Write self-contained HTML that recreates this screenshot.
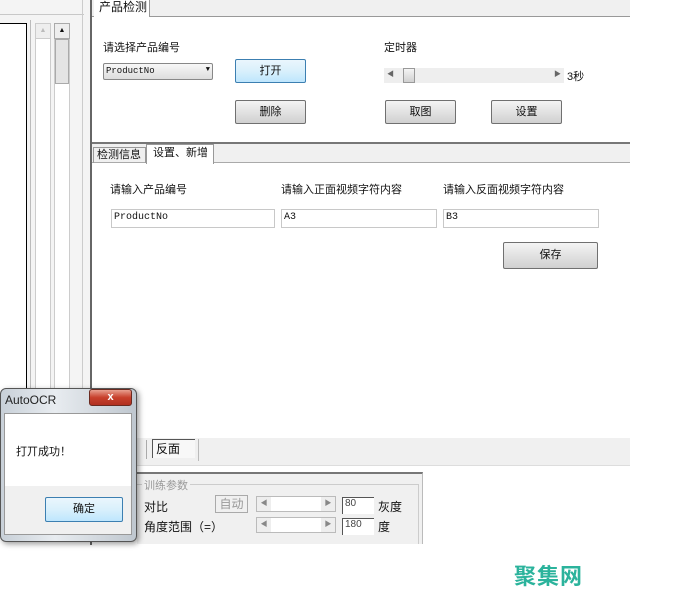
<!DOCTYPE html>
<html><head><meta charset="utf-8"><style>
*{margin:0;padding:0;box-sizing:border-box}
body{width:693px;height:598px;background:#fff;position:relative;overflow:hidden;font-family:"Liberation Sans","Noto Sans CJK SC",sans-serif;font-size:11px;color:#111}
.a{position:absolute}
.btn{position:absolute;border:1px solid #707070;border-radius:2px;background:linear-gradient(#f4f4f4,#e2e2e2 50%,#d0d0d0);text-align:center;font-size:11px}
.inp{position:absolute;border:1px solid #c8c8c8;background:#fff;font-family:"Liberation Mono",monospace;font-size:10px;padding:2px 2px;height:19px}
</style></head><body>
<!-- left pane -->
<div class="a" style="left:0;top:0;width:90px;height:395px;background:#f4f4f4"></div>
<div class="a" style="left:0;top:14px;width:84px;height:1px;background:#c8c8c8"></div>
<div class="a" style="left:0;top:23px;width:27px;height:370px;background:#fff;border-top:1px solid #000;border-right:1px solid #000"></div>
<div class="a" style="left:30px;top:20px;width:1px;height:375px;background:#bbb"></div>
<div class="a" style="left:35px;top:23px;width:16px;height:372px;background:#fff;border:1px solid #ccc"></div>
<div class="a" style="left:35px;top:23px;width:16px;height:16px;background:#eee;border:1px solid #ccc;font-size:7px;color:#bbb;text-align:center;line-height:14px">▲</div>
<div class="a" style="left:54px;top:23px;width:16px;height:372px;background:#fff;border:1px solid #ccc"></div>
<div class="a" style="left:54px;top:23px;width:16px;height:16px;background:#eee;border:1px solid #aaa;font-size:7px;text-align:center;line-height:14px">▲</div>
<div class="a" style="left:55px;top:39px;width:14px;height:45px;background:#e4e4e4;border:1px solid #aaa"></div>
<div class="a" style="left:82px;top:0;width:1px;height:395px;background:#ccc"></div>
<div class="a" style="left:90px;top:0;width:2px;height:545px;background:#666"></div>
<!-- top tab -->
<div class="a" style="left:92px;top:0;width:538px;height:17px;background:#f0f0f0;border-bottom:1px solid #999"></div>
<div class="a" style="left:94px;top:0;width:56px;height:17px;background:#fff;border-right:1px solid #999;padding-left:5px;font-size:12px;line-height:15px">产品检测</div>
<div class="a" style="left:92px;top:17px;width:538px;height:125px;background:#fff"></div>
<div class="a" style="left:103px;top:39px;font-size:11px">请选择产品编号</div>
<div class="a" style="left:103px;top:63px;width:110px;height:17px;border:1px solid #888;border-radius:2px;background:linear-gradient(#f8f8f8,#ddd);font-family:'Liberation Mono',monospace;font-size:9px;padding:2px 2px">ProductNo<span style="float:right;font-size:7px">▼</span></div>
<div class="btn" style="left:235px;top:59px;width:71px;height:24px;line-height:22px;border-color:#3c7fb1;background:linear-gradient(#eaf6fd,#d9f0fc 50%,#bee6fd)">打开</div>
<div class="btn" style="left:235px;top:100px;width:71px;height:24px;line-height:22px">删除</div>
<div class="a" style="left:384px;top:39px">定时器</div>
<div class="a" style="left:384px;top:68px;width:180px;height:15px;background:#eee"><span class="a" style="left:3px;top:1px;font-size:7px;color:#666">◀</span><span class="a" style="right:3px;top:1px;font-size:7px;color:#666">▶</span></div>
<div class="a" style="left:403px;top:68px;width:12px;height:15px;border:1px solid #999;background:linear-gradient(#f4f4f4,#d0d0d0)"></div>
<div class="a" style="left:567px;top:68px;font-size:11px">3秒</div>
<div class="btn" style="left:385px;top:100px;width:71px;height:24px;line-height:22px">取图</div>
<div class="btn" style="left:491px;top:100px;width:71px;height:24px;line-height:22px">设置</div>
<!-- second tabs -->
<div class="a" style="left:92px;top:142px;width:538px;height:2px;background:#777"></div>
<div class="a" style="left:92px;top:144px;width:538px;height:19px;background:#f0f0f0;border-bottom:1px solid #aaa"></div>
<div class="a" style="left:93px;top:147px;width:53px;height:16px;border:1px solid #999;border-bottom:none;padding-left:3px;font-size:11px;line-height:15px">检测信息</div>
<div class="a" style="left:146px;top:144px;width:68px;height:20px;background:#fff;border:1px solid #999;border-bottom:none;padding-left:6px;font-size:11px;line-height:16px">设置、新增</div>
<div class="a" style="left:92px;top:164px;width:538px;height:274px;background:#fff"></div>
<div class="a" style="left:110px;top:181px">请输入产品编号</div>
<div class="a" style="left:281px;top:181px">请输入正面视频字符内容</div>
<div class="a" style="left:443px;top:181px">请输入反面视频字符内容</div>
<div class="inp" style="left:111px;top:209px;width:164px">ProductNo</div>
<div class="inp" style="left:281px;top:209px;width:156px">A3</div>
<div class="inp" style="left:443px;top:209px;width:156px">B3</div>
<div class="btn" style="left:503px;top:242px;width:95px;height:27px;line-height:25px">保存</div>
<!-- lower strip -->
<div class="a" style="left:137px;top:438px;width:493px;height:28px;background:#f0f0f0;border-bottom:1px solid #ddd"></div>
<div class="a" style="left:146px;top:440px;width:1px;height:19px;background:#aaa"></div>
<div class="a" style="left:152px;top:439px;width:43px;height:19px;border-left:1px solid #555;border-top:1px solid #555;background:#f8f8f8;padding-left:3px;font-size:12px;line-height:18px">反面</div>
<div class="a" style="left:198px;top:439px;width:1px;height:22px;background:#bbb"></div>
<div class="a" style="left:137px;top:472px;width:286px;height:72px;background:#f0f0f0;border-top:2px solid #777;border-right:1px solid #bbb"></div>
<div class="a" style="left:137px;top:484px;width:282px;height:60px;border:1px solid #ccc;border-left:none;border-bottom:none"></div>
<div class="a" style="left:142px;top:477px;background:#f0f0f0;color:#999;padding:0 2px">训练参数</div>
<div class="a" style="left:144px;top:498px;font-size:12px">对比</div>
<div class="a" style="left:144px;top:518px;font-size:12px">角度范围（=）</div>
<div class="a" style="left:215px;top:495px;width:33px;height:18px;border:1px solid #aaa;color:#999;text-align:center;line-height:16px;font-size:12px">自动</div>
<div class="a" style="left:256px;top:496px;width:80px;height:16px;background:#fff;border:1px solid #bbb"><span class="a" style="left:0;top:0;width:14px;height:14px;background:#eee;font-size:7px;color:#888;text-align:center;line-height:14px">◀</span><span class="a" style="right:0;top:0;width:14px;height:14px;background:#eee;font-size:7px;color:#888;text-align:center;line-height:14px">▶</span></div>
<div class="a" style="left:256px;top:517px;width:80px;height:16px;background:#fff;border:1px solid #bbb"><span class="a" style="left:0;top:0;width:14px;height:14px;background:#eee;font-size:7px;color:#888;text-align:center;line-height:14px">◀</span><span class="a" style="right:0;top:0;width:14px;height:14px;background:#eee;font-size:7px;color:#888;text-align:center;line-height:14px">▶</span></div>
<div class="a" style="left:342px;top:497px;width:32px;height:17px;background:#fff;border-left:1px solid #555;border-top:1px solid #555;font-size:10px;padding-left:2px;color:#444">80</div>
<div class="a" style="left:342px;top:518px;width:32px;height:17px;background:#fff;border-left:1px solid #555;border-top:1px solid #555;font-size:10px;padding-left:2px;color:#444">180</div>
<div class="a" style="left:378px;top:498px;font-size:12px">灰度</div>
<div class="a" style="left:378px;top:518px;font-size:12px">度</div>
<!-- dialog -->
<div class="a" style="left:0;top:388px;width:137px;height:154px;border:1px solid #555;border-radius:6px;background:linear-gradient(90deg,#c8d0d8,#e8ecf0 40%,#bfc7cf);box-shadow:2px 2px 6px rgba(0,0,0,.4)"></div>
<div class="a" style="left:5px;top:393px;font-size:12px;color:#222">AutoOCR</div>
<div class="a" style="left:89px;top:389px;width:43px;height:17px;border:1px solid #6a2a20;border-radius:3px;background:linear-gradient(#e8a090,#c8402c 50%,#b03020);color:#fff;font-weight:bold;font-size:11px;text-align:center;line-height:15px">x</div>
<div class="a" style="left:4px;top:413px;width:128px;height:73px;background:#fff;border:1px solid #999;border-bottom:none"></div>
<div class="a" style="left:4px;top:486px;width:128px;height:49px;background:#f0f0f0;border:1px solid #999;border-top:none"></div>
<div class="a" style="left:16px;top:443px">打丌成功！</div>
<div class="btn" style="left:45px;top:497px;width:78px;height:25px;line-height:23px;border-color:#3c7fb1;background:linear-gradient(#eaf6fd,#d9f0fc 50%,#bee6fd)">确定</div>
<!-- logo -->
<div class="a" style="left:514px;top:562px;font-size:22px;font-weight:bold;color:#2bb39c;letter-spacing:1px;font-family:'Noto Sans CJK SC',sans-serif;line-height:26px">聚集网</div>
</body></html>
